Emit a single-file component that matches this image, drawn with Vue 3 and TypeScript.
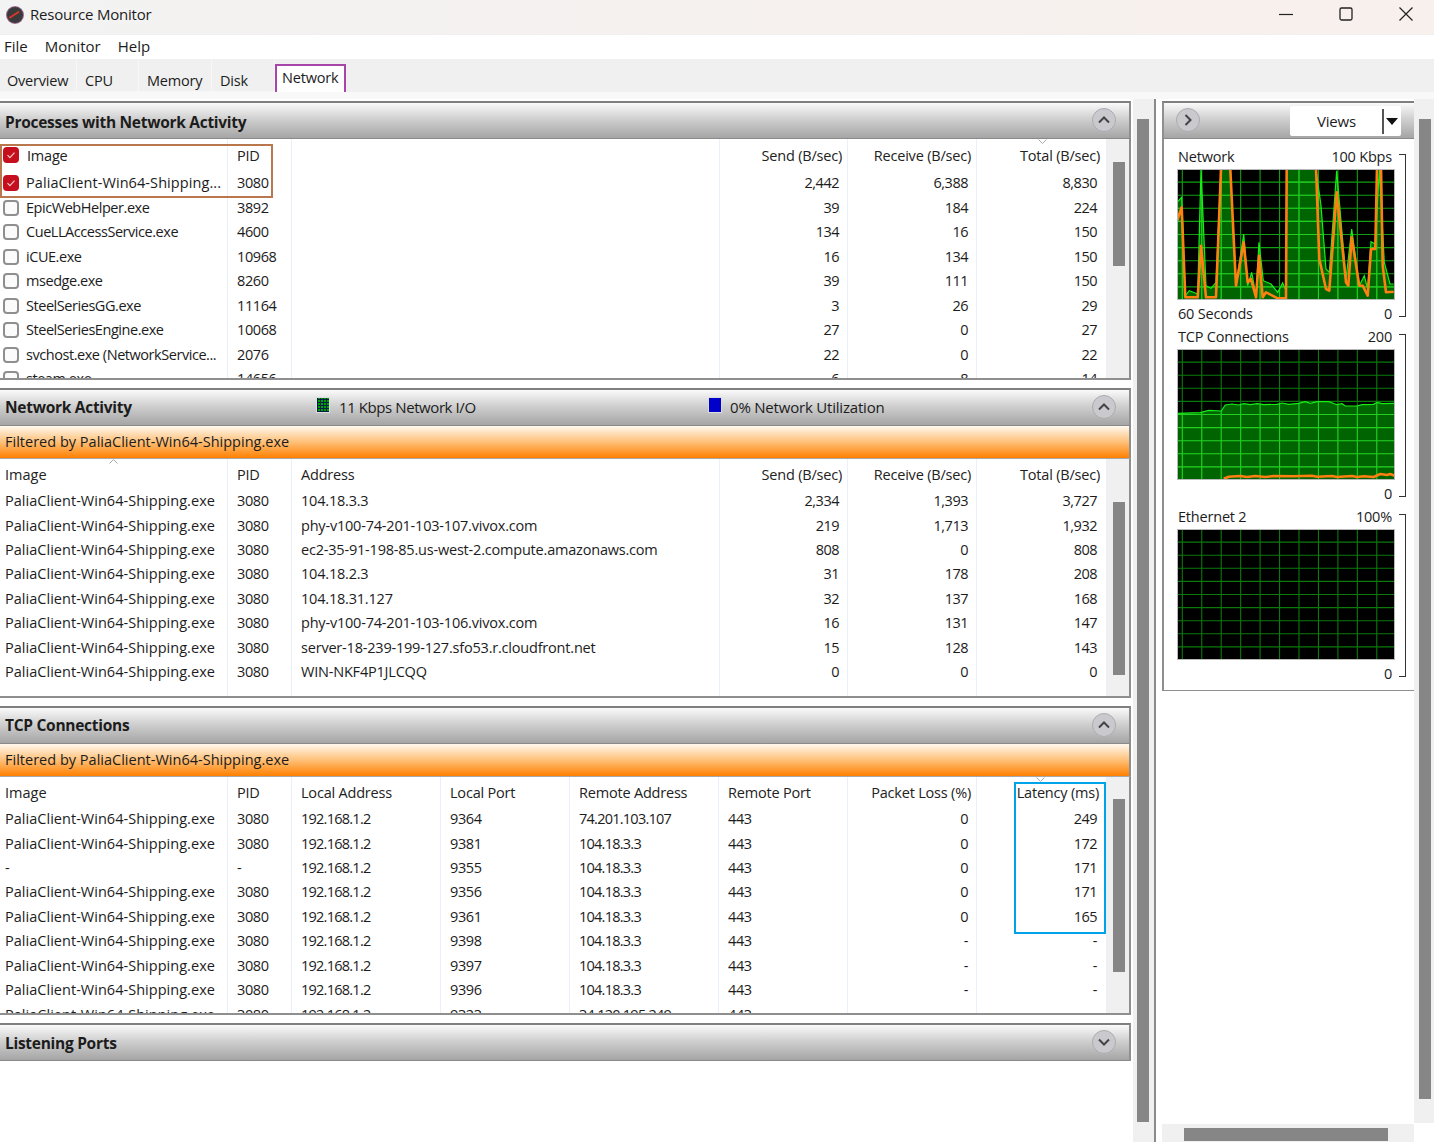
<script setup lang="ts">
type Pt = [number, number]

// chart traces, read off the reference at 3x
const toLocal = (pts: Pt[], x0: number, y0: number) =>
  pts.map(([x, y]) => `${((x - x0) / 3).toFixed(1)},${((y - y0) / 3).toFixed(1)}`).join(' ')

const netGreen: Pt[] = [[533,610],[547,595],[558,890],[570,875],[595,885],[605,510],[620,860],[635,868],[650,850],[665,510],[693,510],[710,860],[733,705],[745,860],[757,820],[770,890],[779,730],[792,845],[815,855],[835,880],[850,852],[860,875],[862,510],[950,510],[965,620],[980,810],[990,820],[1012,515],[1040,840],[1057,690],[1080,860],[1095,830],[1105,870],[1115,728],[1128,735],[1140,510],[1155,790],[1172,855],[1183,855]]
const netOrange: Pt[] = [[533,665],[547,625],[558,895],[595,895],[605,740],[620,895],[650,895],[665,510],[668,505],[690,505],[693,510],[710,860],[733,730],[745,850],[755,840],[770,895],[779,770],[790,895],[800,880],[835,898],[860,898],[862,505],[950,505],[960,780],[980,870],[990,875],[1012,580],[1040,850],[1047,860],[1057,715],[1080,860],[1090,860],[1105,890],[1115,750],[1128,750],[1133,505],[1145,505],[1150,800],[1160,880],[1183,878]]
const tcpGreen: Pt[] = [[50,285],[120,283],[145,276],[183,278],[195,260],[215,257],[235,260],[250,256],[270,259],[290,256],[310,259],[350,258],[365,254],[385,258],[415,255],[435,250],[450,255],[470,250],[505,250],[530,259],[545,256],[555,263],[590,263],[605,259],[640,258],[650,252],[665,256],[703,255]]
const tcpOrange: Pt[] = [[190,481],[205,475],[240,473],[260,476],[285,473],[315,476],[340,473],[400,474],[455,472],[470,475],[515,473],[530,476],[575,473],[590,476],[610,474],[640,476],[660,467],[680,470],[690,467],[703,472]]

const hLines = Array.from({ length: 9 }, (_, i) => 13.1 * (i + 1))
const vLines = Array.from({ length: 11 }, (_, i) => 5.3 + 19.45 * i)

const charts = [
  { id: 'net', title: 'Network', max: '100 Kbps', left: '60 Seconds', grid: '#10a010', green: toLocal(netGreen, 533, 510), orange: toLocal(netOrange, 533, 510) },
  { id: 'tcp', title: 'TCP Connections', max: '200', left: '', grid: '#0b7a0b', green: toLocal(tcpGreen, 50, 92), orange: toLocal(tcpOrange, 50, 92) },
  { id: 'eth', title: 'Ethernet 2', max: '100%', left: '', grid: '#0b7a0b', green: '', orange: '' },
]

const processes = [
  ['EpicWebHelper.exe', '3892', '39', '184', '224'],
  ['CueLLAccessService.exe', '4600', '134', '16', '150'],
  ['iCUE.exe', '10968', '16', '134', '150'],
  ['msedge.exe', '8260', '39', '111', '150'],
  ['SteelSeriesGG.exe', '11164', '3', '26', '29'],
  ['SteelSeriesEngine.exe', '10068', '27', '0', '27'],
  ['svchost.exe (NetworkService...', '2076', '22', '0', '22'],
  ['steam.exe', '14656', '6', '8', '14'],
]

const palia = 'PaliaClient-Win64-Shipping.exe'
const activity = [
  ['104.18.3.3', '2,334', '1,393', '3,727'],
  ['phy-v100-74-201-103-107.vivox.com', '219', '1,713', '1,932'],
  ['ec2-35-91-198-85.us-west-2.compute.amazonaws.com', '808', '0', '808'],
  ['104.18.2.3', '31', '178', '208'],
  ['104.18.31.127', '32', '137', '168'],
  ['phy-v100-74-201-103-106.vivox.com', '16', '131', '147'],
  ['server-18-239-199-127.sfo53.r.cloudfront.net', '15', '128', '143'],
  ['WIN-NKF4P1JLCQQ', '0', '0', '0'],
]

const tcp = [
  [palia, '3080', '9364', '74.201.103.107', '0', '249'],
  [palia, '3080', '9381', '104.18.3.3', '0', '172'],
  ['-', '-', '9355', '104.18.3.3', '0', '171'],
  [palia, '3080', '9356', '104.18.3.3', '0', '171'],
  [palia, '3080', '9361', '104.18.3.3', '0', '165'],
  [palia, '3080', '9398', '104.18.3.3', '-', '-'],
  [palia, '3080', '9397', '104.18.3.3', '-', '-'],
  [palia, '3080', '9396', '104.18.3.3', '-', '-'],
  [palia, '3080', '9323', '34.120.195.249', '-', '-'],
]
</script>

<template>
  <div class="app">
    <header class="titlebar">
      <svg class="app-icon" width="20" height="20" viewBox="0 0 20 20">
        <circle cx="10" cy="10" r="9" fill="#9a6a8e" />
        <circle cx="10" cy="10" r="8" fill="#3a3a3c" />
        <path d="M5 12.5 L13.5 7" stroke="#d8382c" stroke-width="2" stroke-linecap="round" />
      </svg>
      <span class="title-text">Resource Monitor</span>
      <div class="win-btns">
        <svg width="16" height="16" viewBox="0 0 16 16"><path d="M1 8.5h14" stroke="#222" stroke-width="1.2" /></svg>
        <svg width="16" height="16" viewBox="0 0 16 16"><rect x="2" y="2" width="12" height="12" rx="1.5" fill="none" stroke="#222" stroke-width="1.3" /></svg>
        <svg width="16" height="16" viewBox="0 0 16 16"><path d="M1.5 1.5l13 13M14.5 1.5l-13 13" stroke="#222" stroke-width="1.2" /></svg>
      </div>
    </header>

    <nav class="menubar">
      <span>File</span>
      <span>Monitor</span>
      <span>Help</span>
    </nav>

    <div class="tabs">
      <span class="tab t-overview">Overview</span>
      <span class="tab t-cpu">CPU</span>
      <span class="tab t-memory">Memory</span>
      <span class="tab t-disk">Disk</span>
      <span class="tab t-network">Network</span>
    </div>
    <div class="strip"></div>

    <main class="main">
      <div class="left">
        <!-- processes -->
        <section class="panel p1">
          <div class="sec-head">
            <strong>Processes with Network Activity</strong>
            <span class="round"><svg width="14" height="10" viewBox="0 0 14 10"><path d="M2 7.5L7 2.5l5 5" fill="none" stroke="#444" stroke-width="2" /></svg></span>
          </div>
          <div class="sec-body">
            <div class="table">
              <div class="row head cols-a h1">
                <div class="cell check-cell"><i class="cb on cb-head"><svg width="10" height="10" viewBox="0 0 10 10"><path d="M1.5 5.2l2.4 2.4 4.6-5" fill="none" stroke="#f4c6c6" stroke-width="1.2" /></svg></i><span class="hd-image">Image</span></div>
                <div class="cell">PID</div>
                <div class="cell"></div>
                <div class="cell num">Send (B/sec)</div>
                <div class="cell num">Receive (B/sec)</div>
                <div class="cell num sorted">
                  <svg class="sort s-total" width="9" height="5" viewBox="0 0 9 5"><path d="M.5.5l4 4 4-4" fill="none" stroke="#aaa" /></svg>
                  Total (B/sec)
                </div>
              </div>
              <div class="row cols-a">
                <div class="cell check-cell"><i class="cb on"><svg width="10" height="10" viewBox="0 0 10 10"><path d="M1.5 5.2l2.4 2.4 4.6-5" fill="none" stroke="#f4c6c6" stroke-width="1.2" /></svg></i><span class="palia-name">PaliaClient-Win64-Shipping...</span></div>
                <div class="cell pid">3080</div>
                <div class="cell"></div>
                <div class="cell val">2,442</div>
                <div class="cell val">6,388</div>
                <div class="cell val">8,830</div>
              </div>
              <div v-for="p in processes" :key="p[1]" class="row cols-a">
                <div class="cell check-cell"><i class="cb"></i><span>{{ p[0] }}</span></div>
                <div class="cell pid">{{ p[1] }}</div>
                <div class="cell"></div>
                <div class="cell val">{{ p[2] }}</div>
                <div class="cell val">{{ p[3] }}</div>
                <div class="cell val">{{ p[4] }}</div>
              </div>
            </div>
            <div class="vbar"><div class="thumb th1"></div></div>
          </div>
          <div class="mark-red"></div>
        </section>

        <!-- network activity -->
        <section class="panel p2">
          <div class="sec-head">
            <strong>Network Activity</strong>
            <span class="stat stat-io"><i class="sq green"></i>11 Kbps Network I/O</span>
            <span class="stat stat-util"><i class="sq blue"></i>0% Network Utilization</span>
            <span class="round"><svg width="14" height="10" viewBox="0 0 14 10"><path d="M2 7.5L7 2.5l5 5" fill="none" stroke="#444" stroke-width="2" /></svg></span>
          </div>
          <div class="filter">Filtered by {{ palia }}</div>
          <div class="sec-body">
            <div class="table stack">
              <div class="row head cols-a h2">
                <div class="cell first sorted">
                  <svg class="sort s-image" width="9" height="5" viewBox="0 0 9 5"><path d="M.5 4.5l4-4 4 4" fill="none" stroke="#aaa" /></svg>
                  Image
                </div>
                <div class="cell">PID</div>
                <div class="cell">Address</div>
                <div class="cell num">Send (B/sec)</div>
                <div class="cell num">Receive (B/sec)</div>
                <div class="cell num">Total (B/sec)</div>
              </div>
              <div v-for="a in activity" :key="a[0]" class="row tight cols-a">
                <div class="cell first">{{ palia }}</div>
                <div class="cell pid">3080</div>
                <div class="cell">{{ a[0] }}</div>
                <div class="cell val">{{ a[1] }}</div>
                <div class="cell val">{{ a[2] }}</div>
                <div class="cell val">{{ a[3] }}</div>
              </div>
              <div class="row cols-a fill"><div v-for="n in 6" :key="n" class="cell"></div></div>
            </div>
            <div class="vbar"><div class="thumb th2"></div></div>
          </div>
        </section>

        <!-- tcp -->
        <section class="panel p3">
          <div class="sec-head">
            <strong>TCP Connections</strong>
            <span class="round"><svg width="14" height="10" viewBox="0 0 14 10"><path d="M2 7.5L7 2.5l5 5" fill="none" stroke="#444" stroke-width="2" /></svg></span>
          </div>
          <div class="filter">Filtered by {{ palia }}</div>
          <div class="sec-body">
            <div class="table">
              <div class="row head cols-b h2">
                <div class="cell first">Image</div>
                <div class="cell">PID</div>
                <div class="cell">Local Address</div>
                <div class="cell">Local Port</div>
                <div class="cell">Remote Address</div>
                <div class="cell">Remote Port</div>
                <div class="cell num">Packet Loss (%)</div>
                <div class="cell num sorted lat">
                  <svg class="sort s-latency" width="9" height="5" viewBox="0 0 9 5"><path d="M.5.5l4 4 4-4" fill="none" stroke="#aaa" /></svg>
                  Latency (ms)
                </div>
              </div>
              <div v-for="t in tcp" :key="t[2]" class="row tight cols-b">
                <div class="cell first">{{ t[0] }}</div>
                <div class="cell pid">{{ t[1] }}</div>
                <div class="cell digits">192.168.1.2</div>
                <div class="cell pid">{{ t[2] }}</div>
                <div class="cell digits">{{ t[3] }}</div>
                <div class="cell pid">443</div>
                <div class="cell val">{{ t[4] }}</div>
                <div class="cell val">{{ t[5] }}</div>
              </div>
            </div>
            <div class="vbar"><div class="thumb th3"></div></div>
          </div>
          <div class="mark-blue"></div>
        </section>

        <!-- listening -->
        <section class="panel p4">
          <div class="sec-head">
            <strong>Listening Ports</strong>
            <span class="round"><svg width="14" height="10" viewBox="0 0 14 10"><path d="M2 2.5l5 5 5-5" fill="none" stroke="#444" stroke-width="2" /></svg></span>
          </div>
        </section>
      </div>

      <div class="main-scroll"><div class="main-thumb"></div></div>
      <div class="divider"></div>

      <div class="right">
        <div class="side">
          <div class="side-head">
            <span class="round side-round"><svg width="10" height="14" viewBox="0 0 10 14"><path d="M2.5 2l5 5-5 5" fill="none" stroke="#444" stroke-width="2" /></svg></span>
            <div class="views">
              <span class="views-label">Views</span>
              <i class="views-sep"></i>
              <i class="views-arrow"></i>
            </div>
          </div>
          <div class="side-body">
            <div v-for="c in charts" :key="c.id" class="chart-block">
              <div class="chart-col">
                <div class="chart-label"><span>{{ c.title }}</span><span>{{ c.max }}</span></div>
                <svg class="chart" width="218" height="131" viewBox="0 0 218 131">
                  <defs v-if="c.green">
                    <clipPath :id="'fill-' + c.id"><polygon :points="`0,131 ${c.green} 218,131`" /></clipPath>
                  </defs>
                  <rect width="218" height="131" fill="#000" />
                  <polygon v-if="c.green" :points="`0,131 ${c.green} 218,131`" fill="#006400" />
                  <g :stroke="c.grid" stroke-width="1.1">
                    <line v-for="y in hLines" :key="'h' + y" x1="0" x2="218" :y1="y" :y2="y" />
                    <line v-for="x in vLines" :key="'v' + x" y1="0" y2="131" :x1="x" :x2="x" />
                  </g>
                  <g v-if="c.green" stroke="#22d022" stroke-width="1.1" :clip-path="`url(#fill-${c.id})`">
                    <line v-for="y in hLines" :key="'hb' + y" x1="0" x2="218" :y1="y" :y2="y" />
                    <line v-for="x in vLines" :key="'vb' + x" y1="0" y2="131" :x1="x" :x2="x" />
                  </g>
                  <polyline v-if="c.green" :points="c.green" fill="none" stroke="#16ee16" stroke-width="1.2" />
                  <polyline v-if="c.orange" :points="c.orange" fill="none" stroke="#ff7f11" stroke-width="2.6" stroke-linejoin="round" />
                  <rect x=".5" y=".5" width="217" height="130" fill="none" stroke="#b8b8b8" />
                </svg>
                <div class="chart-foot"><span>{{ c.left }}</span><span>0</span></div>
              </div>
              <i class="bracket"></i>
            </div>
          </div>
        </div>
        <div class="hscroll"><div class="hthumb"></div></div>
      </div>

      <div class="far-scroll"><div class="far-track"><div class="far-thumb"></div></div></div>
    </main>
  </div>
</template>

<style scoped>
.app {
  width: 1434px;
  height: 1142px;
  display: flex;
  flex-direction: column;
  overflow: hidden;
  background: #fff;
  color: #1c1c1c;
  font-family: "Open Sans", "Liberation Sans", sans-serif;
  font-size: 14.5px;
  letter-spacing: -0.2px;
}

.titlebar {
  height: 35px;
  display: flex;
  align-items: center;
  padding-left: 5px;
  background: linear-gradient(90deg, #f3f3f3 0%, #f5f1ef 50%, #f8f0ec 100%);
  border-bottom: 1px solid #f0f0f0;
  box-sizing: border-box;
}
.app-icon { margin-right: 5px; margin-top: -4px; }
.title-text { font-size: 15px; margin-top: -6px; }
.win-btns {
  margin-left: auto;
  display: flex;
  gap: 44px;
  padding-right: 20px;
  margin-top: -6px;
}

.menubar {
  height: 24px;
  display: flex;
  align-items: center;
  gap: 17px;
  padding: 0 0 2px 4px;
  box-sizing: border-box;
  background: #fff;
  font-size: 15px;
  letter-spacing: 0;
}

.tabs {
  height: 33px;
  display: flex;
  background: #f0f0f0;
  box-sizing: border-box;
}
.tab {
  box-sizing: border-box;
  padding: 12px 0 0 7px;
  height: 33px;
  border-right: 1px solid #f7f7f7;
  border-bottom: 1px solid #f7f7f7;
}
.t-overview { width: 77px; }
.t-cpu { width: 62px; padding-left: 8px; }
.t-memory { width: 73px; padding-left: 8px; }
.t-disk { width: 63px; padding-left: 8px; }
.t-network {
  width: 71px;
  height: 30px;
  margin-top: 5px;
  padding: 2px 0 0 5px;
  background: #fff;
  border: 2px solid #a646a8;
}
.strip {
  height: 7px;
  background: #f8f8f8;
}

.main {
  flex: 1;
  display: flex;
  min-height: 0;
}

.left {
  width: 1131px;
  padding-top: 2px;
  box-sizing: border-box;
  flex: none;
}

.panel {
  position: relative;
  display: flex;
  flex-direction: column;
  box-sizing: border-box;
  margin-bottom: 8px;
}
.p1 { height: 279px; }
.p2 { height: 310px; }
.p3 { height: 309px; }
.p4 { height: 38px; }
.p1 .sec-head { padding-top: 2px; }
.p2 .sec-head,
.p3 .sec-head { padding-bottom: 1px; }

.sec-head {
  position: relative;
  height: 38px;
  flex: none;
  display: flex;
  align-items: center;
  box-sizing: border-box;
  padding-left: 5px;
  background: linear-gradient(180deg, #fafafa 0%, #d0d0d0 45%, #a5a5a5 100%);
  border-top: 2px solid #7f7f7f;
  border-bottom: 1px solid #8a8a8a;
  border-right: 2px solid #8f8f8f;
  font-size: 15px;
}
.sec-head strong { font-weight: 700; font-size: 15.5px; letter-spacing: -0.28px; }

.stat { position: absolute; top: 7px; display: flex; align-items: center; }
.stat-io { left: 316px; letter-spacing: -0.42px; }
.stat-util { left: 708px; }
.sq {
  width: 14px;
  height: 16px;
  margin-right: 9px;
  margin-top: -4px;
  border: 1px solid #ddd;
  box-sizing: border-box;
}
.sq.green {
  background-color: #00a000;
  background-image: repeating-linear-gradient(0deg, #024 0 1px, transparent 1px 3px), repeating-linear-gradient(90deg, #024 0 1px, transparent 1px 3px);
}
.sq.blue { background: #0000c8; margin-right: 8px; }

.round {
  position: absolute;
  right: 13px;
  top: 5px;
  width: 24px;
  height: 24px;
  box-sizing: border-box;
  border-radius: 50%;
  background: #c9c9ce;
  border: 1.5px solid #acacb0;
  display: flex;
  align-items: center;
  justify-content: center;
}

.filter {
  height: 33px;
  flex: none;
  box-sizing: border-box;
  padding: 6px 0 0 5px;
  background: linear-gradient(180deg, #fff8ee 0%, #ffc078 50%, #ff8000 100%);
  border-bottom: 1px solid #a8a8a8;
  border-right: 2px solid #8f8f8f;
  letter-spacing: 0.01px;
}

.sec-body {
  flex: 1;
  min-height: 0;
  display: flex;
  border-right: 2px solid #8f8f8f;
  border-bottom: 2px solid #8f8f8f;
}
.table {
  width: 1107px;
  flex: none;
  overflow: hidden;
}
.table.stack {
  display: flex;
  flex-direction: column;
}

.row {
  display: grid;
  flex: none;
  height: 24.5px;
  line-height: 24.5px;
}
.row.tight { height: 24.43px; line-height: 24.43px; }
.row.fill { flex: 1; }
.row.head { color: #222; }
.h1 { height: 32px; line-height: 33px; }
.h2 { height: 30.2px; line-height: 31px; }
.cols-a { grid-template-columns: 228px 64px 428px 128px 129px 130px; }
.cols-b { grid-template-columns: 228px 64px 149px 129px 149px 129px 129px 130px; }

.cell {
  position: relative;
  box-sizing: border-box;
  padding-left: 9px;
  white-space: nowrap;
  overflow: hidden;
  border-right: 1px solid #e9f0fa;
}
.cell.sorted { overflow: visible; }
.cell.first { padding-left: 5px; letter-spacing: 0.03px; }
.cell.pid { letter-spacing: -0.4px; }
.cell.digits { letter-spacing: -0.75px; }
.cell.num { padding: 0 5px 0 0; text-align: right; }
.cell.num:last-child { padding-right: 6px; }
.cell.num.lat { padding-right: 7px; }
.cell.val { padding: 0 8px 0 0; text-align: right; letter-spacing: -0.5px; }
.cell.val:last-child { padding-right: 9px; }

.check-cell {
  padding-left: 26px;
  letter-spacing: -0.45px;
}
.palia-name { letter-spacing: 0.08px; }
.hd-image { margin-left: 1px; letter-spacing: -0.2px; }
.cb {
  position: absolute;
  left: 3px;
  top: 4px;
  width: 16px;
  height: 16px;
  box-sizing: border-box;
  border: 2px solid #8f8f8f;
  border-radius: 4px;
  background: #fbfbfb;
  display: flex;
  align-items: center;
  justify-content: center;
}
.cb.on { background: #c50f1f; border-color: #c50f1f; }
.cb-head { top: 8px; }

.sort { position: absolute; top: 0; }
.s-total { right: 59px; }
.s-image { left: 109px; top: 0; }
.s-latency { right: 61px; }

.vbar {
  flex: 1;
  background: #f0f0f0;
  padding-left: 6px;
}
.thumb { width: 12px; background: #868686; }
.th1 { margin-top: 23px; height: 104px; }
.th2 { margin-top: 43px; height: 173px; }
.th3 { margin-top: 22px; height: 173px; }

/* annotation boxes drawn over the screenshot */
.mark-red {
  position: absolute;
  left: 0;
  top: 43px;
  width: 273px;
  height: 54px;
  box-sizing: border-box;
  border: 2px solid #b9774e;
  pointer-events: none;
}
.mark-blue {
  position: absolute;
  left: 1014px;
  top: 76px;
  width: 92px;
  height: 152px;
  box-sizing: border-box;
  border: 2.5px solid #00a2e8;
  pointer-events: none;
}

.main-scroll {
  width: 21px;
  flex: none;
  margin-left: 2px;
  background: #f0f0f0;
  padding-left: 4px;
  box-sizing: border-box;
}
.main-thumb {
  width: 12px;
  height: 1003px;
  margin-top: 20px;
  background: #868686;
}
.divider {
  width: 2px;
  flex: none;
  background: #8a8a8a;
}

.right {
  width: 258px;
  flex: none;
  display: flex;
  flex-direction: column;
  padding-left: 6px;
  padding-top: 2px;
  box-sizing: border-box;
}
.side { flex: 1; min-height: 0; }
.side-head {
  position: relative;
  height: 38px;
  box-sizing: border-box;
  background: linear-gradient(180deg, #fafafa 0%, #d0d0d0 45%, #a5a5a5 100%);
  border-top: 2px solid #7f7f7f;
  border-left: 2px solid #8f8f8f;
  border-bottom: 1px solid #8a8a8a;
}
.side-round { left: 12px; right: auto; }
.views {
  position: absolute;
  left: 126px;
  top: 3px;
  width: 111px;
  height: 30px;
  background: #fff;
  border-radius: 2px;
  font-size: 15px;
}
.views-label { position: absolute; left: 27px; top: 5px; }
.views-sep {
  position: absolute;
  left: 92px;
  top: 3px;
  width: 2px;
  height: 25px;
  background: #555;
}
.views-arrow {
  position: absolute;
  left: 96px;
  top: 12px;
  border-left: 6px solid transparent;
  border-right: 6px solid transparent;
  border-top: 7px solid #111;
}

.side-body {
  height: 552px;
  box-sizing: border-box;
  padding: 6px 0 0 13px;
  border-left: 2px solid #8f8f8f;
  border-bottom: 1px solid #8f8f8f;
}
.chart-block {
  display: flex;
  height: 180px;
}
.chart-col { width: 218px; flex: none; }
.chart-label,
.chart-foot {
  display: flex;
  justify-content: space-between;
  padding: 0 3px 0 1px;
  height: 24px;
  line-height: 23px;
}
.chart-foot { height: 25px; line-height: 28px; }
.chart { display: block; }
.bracket {
  width: 7px;
  margin: 9px 0 8px 4px;
  box-sizing: border-box;
  border: 1.5px solid #333;
  border-left: none;
}

.hscroll {
  height: 18px;
  flex: none;
  background: #f0f0f0;
  padding: 4px 0 0 22px;
  box-sizing: border-box;
}
.hthumb { width: 204px; height: 13px; background: #868686; }

.far-scroll {
  width: 20px;
  flex: none;
}
.far-track {
  height: 1024px;
  background: #f0f0f0;
  padding: 20px 0 0 5px;
  box-sizing: border-box;
}
.far-thumb { width: 12px; height: 980px; background: #868686; }
</style>

<style>
html, body { margin: 0; overflow: hidden; }
</style>
